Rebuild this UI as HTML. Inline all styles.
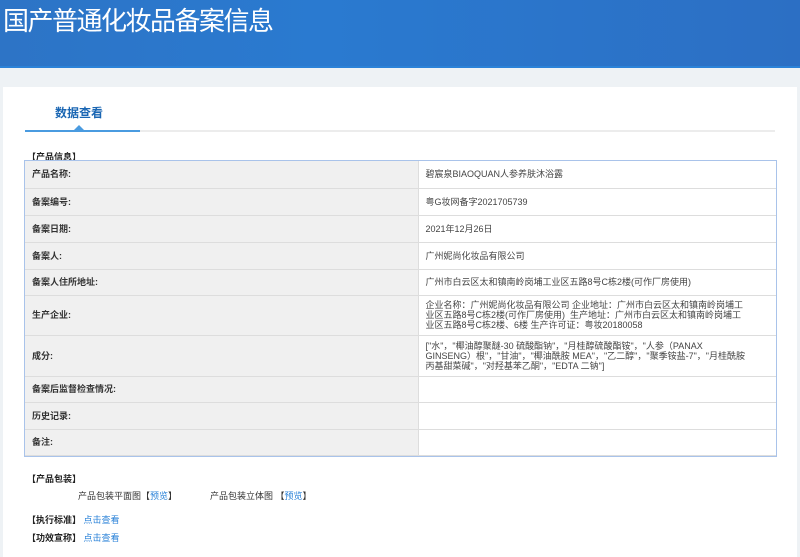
<!DOCTYPE html>
<html><head><meta charset="utf-8"><style>
*{margin:0;padding:0;box-sizing:border-box}
body{width:800px;height:551px;overflow:hidden;background:#eef2f5;font-family:"Liberation Sans","Microsoft YaHei","Noto Sans CJK SC",sans-serif;font-size:9px;color:#333;position:relative}
.hd{position:absolute;left:0;top:0;width:800px;height:68px;background:linear-gradient(90deg,#2d74c6 0%,#2a7ad0 40%,#2c6fc4 100%);border-bottom:2px solid #2b82d8}
.hd h1{position:absolute;left:3px;top:3px;color:#fff;font-weight:normal;font-size:26px;line-height:34px;letter-spacing:-1.5px;font-family:"Noto Sans CJK SC",sans-serif}
.panel{position:absolute;left:3px;top:87px;width:794px;height:470px;background:#fff}
.tab{position:absolute;left:55px;top:104px;color:#1a66b3;font-size:12px;font-weight:bold;font-family:"Noto Sans CJK SC",sans-serif}
.line{position:absolute;left:25px;top:130px;width:750px;height:2px;background:#ececec}
.line2{position:absolute;left:25px;top:130px;width:115px;height:2px;background:#4a9be0}
.tri{position:absolute;left:74px;top:125px;width:0;height:0;border-left:5px solid transparent;border-right:5px solid transparent;border-bottom:5px solid #4a9be0}
.sec{position:absolute;left:27px;font-weight:bold;font-size:9px;color:#222}
table{position:absolute;left:25px;top:161px;width:751px;border-collapse:collapse;outline:1px solid #a9c3ea}
td{border-bottom:1px solid #ddd;padding:0 7px;vertical-align:middle;font-size:9px;line-height:10px}
td.l{width:393px;background:#f0f0f0;font-weight:bold;border-right:1px solid #ddd;color:#333}
td.v{background:#fff;color:#444;padding-right:28px}
.lnk{color:#2a82d8}
</style></head><body>
<div class="hd"><h1>国产普通化妆品备案信息</h1></div>
<div class="panel"></div>
<div class="tab">数据查看</div>
<div class="line"></div><div class="line2"></div><div class="tri"></div>
<div class="sec" style="top:150px">【产品信息】</div>
<table>
<tr style="height:27px"><td class="l">产品名称:</td><td class="v">碧宸泉BIAOQUAN人参养肤沐浴露</td></tr>
<tr style="height:27px"><td class="l">备案编号:</td><td class="v">粤G妆网备字2021705739</td></tr>
<tr style="height:27px"><td class="l">备案日期:</td><td class="v">2021年12月26日</td></tr>
<tr style="height:27px"><td class="l">备案人:</td><td class="v">广州妮尚化妆品有限公司</td></tr>
<tr style="height:26px"><td class="l">备案人住所地址:</td><td class="v">广州市白云区太和镇南岭岗埔工业区五路8号C栋2楼(可作厂房使用)</td></tr>
<tr style="height:40px"><td class="l">生产企业:</td><td class="v">企业名称：广州妮尚化妆品有限公司 企业地址：广州市白云区太和镇南岭岗埔工业区五路8号C栋2楼(可作厂房使用) &nbsp;生产地址：广州市白云区太和镇南岭岗埔工业区五路8号C栋2楼、6楼 生产许可证：粤妆20180058</td></tr>
<tr style="height:41px"><td class="l">成分:</td><td class="v">["水"，"椰油醇聚醚-30 硫酸酯钠"，"月桂醇硫酸酯铵"，"人参（PANAX GINSENG）根"，"甘油"，"椰油酰胺 MEA"，"乙二醇"，"聚季铵盐-7"，"月桂酰胺丙基甜菜碱"，"对羟基苯乙酮"，"EDTA 二钠"]</td></tr>
<tr style="height:26px"><td class="l">备案后监督检查情况:</td><td class="v"></td></tr>
<tr style="height:27px"><td class="l">历史记录:</td><td class="v"></td></tr>
<tr style="height:26px"><td class="l">备注:</td><td class="v"></td></tr>
</table>
<div class="sec" style="top:472px">【产品包装】</div>
<div style="position:absolute;left:78px;top:489px">产品包装平面图【<span class="lnk">预览</span>】</div>
<div style="position:absolute;left:210px;top:489px">产品包装立体图 【<span class="lnk">预览</span>】</div>
<div class="sec" style="top:513px">【执行标准】 <span class="lnk" style="font-weight:normal">点击查看</span></div>
<div class="sec" style="top:531px">【功效宣称】 <span class="lnk" style="font-weight:normal">点击查看</span></div>
</body></html>
